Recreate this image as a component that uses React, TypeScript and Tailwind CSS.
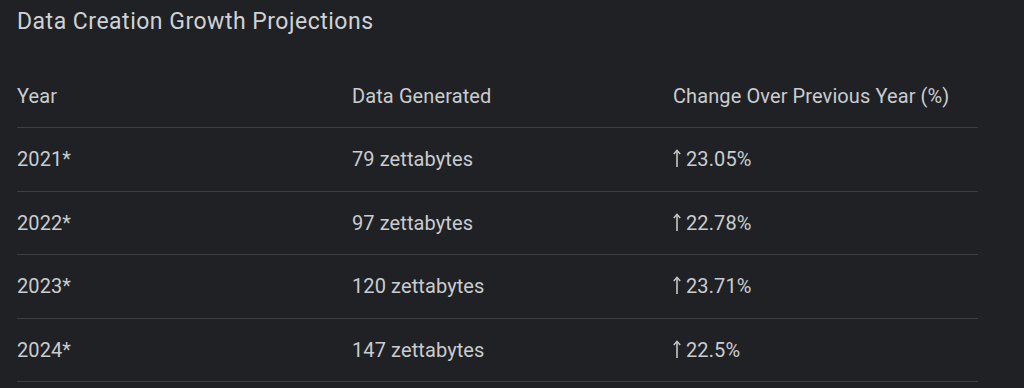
import React from "react";

const ROWS = [
  { year: "2021*", data: "79 zettabytes", change: "23.05%" },
  { year: "2022*", data: "97 zettabytes", change: "22.78%" },
  { year: "2023*", data: "120 zettabytes", change: "23.71%" },
  { year: "2024*", data: "147 zettabytes", change: "22.5%" },
];

function UpArrow() {
  return (
    <svg width="8" height="19" viewBox="0 0 8 19" className="mr-[5px] -mt-[1px]" aria-hidden="true">
      <path d="M4 1.5V18" stroke="#c4c7c9" strokeWidth="1.6" fill="none" />
      <path d="M0.8 5L4 1.3L7.2 5" stroke="#c4c7c9" strokeWidth="1.5" fill="none" />
    </svg>
  );
}

export default function App() {
  return (
    <div className="w-[1024px] h-[388px] overflow-hidden bg-[#202124] text-[#c9ccd0] font-['Roboto',sans-serif]">
      <div className="pl-[17px] pt-[9px] w-[978px]">
        <h1 className="text-[23px] leading-[26px] tracking-[0.5px] text-[#cfd2d5]">Data Creation Growth Projections</h1>
        <div className="mt-[29px] grid grid-cols-[335px_321px_1fr] h-[64px] items-center border-b border-[#3c4043] text-[20px] tracking-[0.1px]">
          <span>Year</span>
          <span>Data Generated</span>
          <span>Change Over Previous Year (%)</span>
        </div>
        {ROWS.map((r) => (
          <div key={r.year} className="grid grid-cols-[335px_321px_1fr] h-[63.5px] items-center border-b border-[#3c4043] text-[20px] tracking-[0.1px]">
            <span>{r.year}</span>
            <span>{r.data}</span>
            <span className="flex items-center">
              <UpArrow />
              {r.change}
            </span>
          </div>
        ))}
      </div>
    </div>
  );
}
